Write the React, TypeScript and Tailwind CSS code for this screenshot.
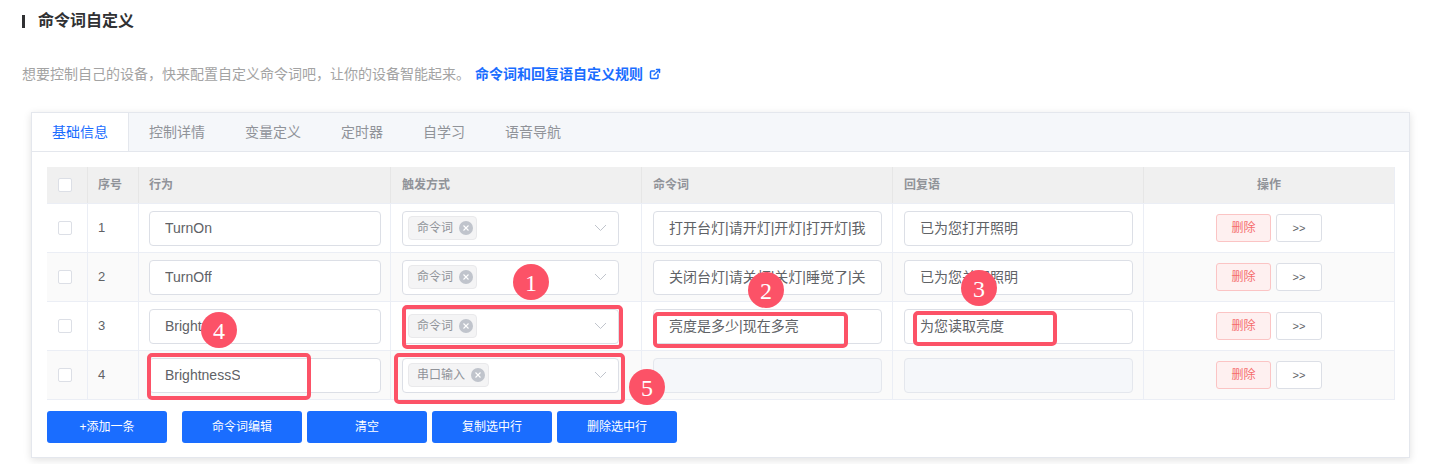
import { ExternalLink } from "lucide-react";

type Row = {
  no: number;
  action: string;
  trigger: string;
  cmd: string;
  reply: string;
  disabled?: boolean;
};

const rows: Row[] = [
  { no: 1, action: "TurnOn", trigger: "命令词", cmd: "打开台灯|请开灯|开灯|打开灯|我要开灯", reply: "已为您打开照明" },
  { no: 2, action: "TurnOff", trigger: "命令词", cmd: "关闭台灯|请关灯|关灯|睡觉了|关灯吧", reply: "已为您关闭照明" },
  { no: 3, action: "Brightness", trigger: "命令词", cmd: "亮度是多少|现在多亮", reply: "为您读取亮度" },
  { no: 4, action: "BrightnessS", trigger: "串口输入", cmd: "", reply: "", disabled: true },
];

const tabs = ["基础信息", "控制详情", "变量定义", "定时器", "自学习", "语音导航"];
const actions = ["命令词编辑", "清空", "复制选中行", "删除选中行"];

function Checkbox() {
  return <span className="block h-[14px] w-[14px] rounded-[2px] border border-[#dcdfe6] bg-white" />;
}

function TextBox({ value, width, disabled }: { value: string; width: string; disabled?: boolean }) {
  return (
    <div
      className={`flex h-[35px] items-center rounded-[4px] border px-[15px] text-[14px] text-[#606266] ${width} ${
        disabled ? "border-[#e4e7ed] bg-[#f5f7fa]" : "border-[#dcdfe6] bg-white"
      }`}
    >
      <div className="overflow-hidden whitespace-nowrap">{value}</div>
    </div>
  );
}

function TagSelect({ label }: { label: string }) {
  return (
    <div className="flex h-[35px] w-[217px] items-center justify-between rounded-[4px] border border-[#dcdfe6] bg-white pl-[5px] pr-[11px]">
      <span className="flex h-[24px] items-center gap-[6px] rounded-[4px] border border-[#e9e9eb] bg-[#f4f4f5] pl-[8px] pr-[3px] text-[12px] text-[#909399]">
        {label}
        <span className="flex h-[14px] w-[14px] items-center justify-center rounded-full bg-[#c0c4cc]">
          <svg width="8" height="8" viewBox="0 0 8 8">
            <path d="M1.5 1.5L6.5 6.5M6.5 1.5L1.5 6.5" stroke="#fff" strokeWidth="1.1" />
          </svg>
        </span>
      </span>
      <svg width="13" height="8" viewBox="0 0 13 8" fill="none">
        <path d="M1 1L6.5 6.5L12 1" stroke="#c0c4cc" strokeWidth="1" />
      </svg>
    </div>
  );
}

// red markup drawn on top of the screenshot
function Box({ className }: { className: string }) {
  return <div className={`pointer-events-none absolute rounded-[5px] border-[4px] border-[#fc5267] ${className}`} />;
}

function Badge({ n, className }: { n: number; className: string }) {
  return (
    <div
      className={`absolute flex h-[36px] w-[36px] items-center justify-center rounded-full bg-[#fc5267] pt-[1px] font-['Liberation_Serif',serif] text-[24px] leading-none text-white ${className}`}
    >
      {n}
    </div>
  );
}

const grid = "grid grid-cols-[40px_51px_252px_251px_251px_251px_1fr]";

export default function App() {
  return (
    <div className="relative h-[464px] w-full overflow-hidden bg-white font-['Liberation_Sans','Noto_Sans_CJK_SC',sans-serif]">
      <div className="px-[22px] pt-[10px]">
        <div className="flex h-[22px] items-center gap-[13px]">
          <span className="h-[13px] w-[3px] bg-[#303133]" />
          <h1 className="text-[16px] font-bold text-[#303133]">命令词自定义</h1>
        </div>
        <p className="mt-[32px] flex h-[20px] items-center text-[14px] text-[#a3a3a3]">
          想要控制自己的设备，快来配置自定义命令词吧，让你的设备智能起来。
          <a className="ml-[5px] flex items-center gap-[6px] font-bold text-[#1a6dff]">
            命令词和回复语自定义规则
            <ExternalLink size={12} strokeWidth={3} />
          </a>
        </p>
      </div>

      <div className="ml-[31px] mr-[29px] mt-[28px] border border-[#e4e7ed] bg-white pb-[14px] shadow-[0_2px_8px_rgba(0,0,0,0.12)]">
        <div className="flex h-[39px] border-b border-[#e4e7ed] bg-[#f5f7fa]">
          {tabs.map((t, i) => (
            <div
              key={t}
              className={`flex h-full items-center px-[20px] text-[14px] ${
                i === 0 ? "-mb-px h-[39px] border-r border-[#e4e7ed] bg-white text-[#1a6dff]" : "text-[#909399]"
              }`}
            >
              {t}
            </div>
          ))}
        </div>

        <div className="pl-[15px] pr-[14px] pt-[15px]">
          <div className="border-r border-[#ebeef5]">
            <div className={`${grid} h-[37px] border-b border-[#ebeef5] bg-[#f0f0f0] text-[12px] font-bold text-[#909399]`}>
              <div className="flex items-center pl-[11px]">
                <Checkbox />
              </div>
              <div className="flex items-center border-l border-[#e6e6e6] pl-[10px]">序号</div>
              <div className="flex items-center border-l border-[#e6e6e6] pl-[10px]">行为</div>
              <div className="flex items-center border-l border-[#e6e6e6] pl-[11px]">触发方式</div>
              <div className="flex items-center border-l border-[#e6e6e6] pl-[11px]">命令词</div>
              <div className="flex items-center border-l border-[#e6e6e6] pl-[11px]">回复语</div>
              <div className="flex items-center justify-center border-l border-[#e6e6e6]">操作</div>
            </div>

            {rows.map((r) => (
              <div
                key={r.no}
                className={`${grid} h-[49px] border-b border-[#ebeef5] ${r.no % 2 === 0 ? "bg-[#fafafa]" : "bg-white"}`}
              >
                <div className="flex items-center pl-[11px]">
                  <Checkbox />
                </div>
                <div className="flex items-center border-l border-[#ebeef5] pl-[10px] text-[13px] text-[#606266]">
                  {r.no}
                </div>
                <div className="flex items-center border-l border-[#ebeef5] pl-[10px]">
                  <TextBox value={r.action} width="w-[232px]" />
                </div>
                <div className="flex items-center border-l border-[#ebeef5] pl-[11px]">
                  <TagSelect label={r.trigger} />
                </div>
                <div className="flex items-center border-l border-[#ebeef5] pl-[11px]">
                  <TextBox value={r.cmd} width="w-[229px]" disabled={r.disabled} />
                </div>
                <div className="flex items-center border-l border-[#ebeef5] pl-[11px]">
                  <TextBox value={r.reply} width="w-[229px]" disabled={r.disabled} />
                </div>
                <div className="flex items-center justify-center gap-[5px] border-l border-[#ebeef5]">
                  <button className="flex h-[28px] w-[55px] items-center justify-center rounded-[3px] border border-[#fbc4c4] bg-[#fef0f0] text-[12px] text-[#f56c6c]">
                    删除
                  </button>
                  <button className="flex h-[28px] w-[46px] items-center justify-center rounded-[3px] border border-[#dcdfe6] bg-white text-[11px] text-[#606266]">
                    &gt;&gt;
                  </button>
                </div>
              </div>
            ))}
          </div>

          <div className="mt-[11px] flex">
            <button className="flex h-[32px] w-[120px] items-center justify-center rounded-[3px] bg-[#1a6dff] text-[12px] text-white">
              +添加一条
            </button>
            <div className="ml-[15px] flex gap-[5px]">
              {actions.map((a) => (
                <button
                  key={a}
                  className="flex h-[32px] w-[120px] items-center justify-center rounded-[3px] bg-[#1a6dff] text-[12px] text-white"
                >
                  {a}
                </button>
              ))}
            </div>
          </div>
        </div>
      </div>

      <Box className="left-[402px] top-[305px] h-[44px] w-[221px]" />
      <Box className="left-[394px] top-[353px] h-[51px] w-[231px]" />
      <Box className="left-[653px] top-[312px] h-[36px] w-[195px]" />
      <Box className="left-[913px] top-[311px] h-[35px] w-[144px]" />
      <Box className="left-[147px] top-[353px] h-[47px] w-[164px]" />

      <Badge n={1} className="left-[513px] top-[264px]" />
      <Badge n={2} className="left-[748px] top-[272px]" />
      <Badge n={3} className="left-[961px] top-[270px]" />
      <Badge n={4} className="left-[201px] top-[312px]" />
      <Badge n={5} className="left-[629px] top-[369px]" />
    </div>
  );
}
